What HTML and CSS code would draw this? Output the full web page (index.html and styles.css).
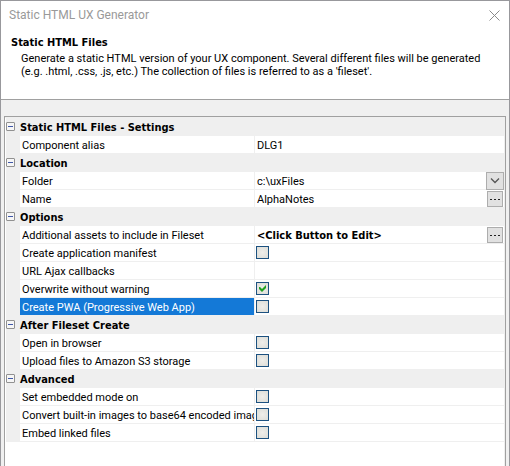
FILE: index.html
```html
<!DOCTYPE html>
<html lang="en">
<head>
<meta charset="utf-8">
<title>Static HTML UX Generator</title>
<link rel="stylesheet" href="styles.css">
</head>
<body>
<main class="dialog">
  <header class="titlebar">
    <span class="title">Static HTML UX Generator</span>
    <button class="close" type="button" aria-label="Close"><svg width="11" height="11" viewBox="0 0 11 11"><path d="M.5 .5l10 10M10.500 .5l-10 10" fill="none" stroke="#8a8a8a"/></svg></button>
  </header>
  <section class="intro">
    <h1>Static HTML Files</h1>
    <p>Generate a static HTML version of your UX component. Several different files will be generated (e.g. .html, .css, .js, etc.) The collection of files is referred to as a 'fileset'.</p>
  </section>
  <form class="panel">
    <div class="sheet">
      <table class="grid">
        <colgroup><col class="col-toggle"><col class="col-name"><col></colgroup>
        <tbody>
          <tr class="group"><td><button class="toggle" type="button" aria-label="Collapse"></button></td><th colspan="2">Static HTML Files - Settings</th></tr>
          <tr><td></td><td class="name"><label for="alias">Component alias</label></td><td class="value"><input class="text" id="alias" type="text" value="DLG1"></td></tr>
        </tbody>
        <tbody>
          <tr class="group"><td><button class="toggle" type="button" aria-label="Collapse"></button></td><th colspan="2">Location</th></tr>
          <tr><td></td><td class="name"><label for="folder">Folder</label></td><td class="value"><div class="field"><select class="text" id="folder"><option>c:\uxFiles</option></select><span class="arrow"><svg width="10" height="6" viewBox="0 0 10 6"><path d="M1 .5L5 4.500L9 .5" fill="none" stroke="#555" stroke-width="1.300"/></svg></span></div></td></tr>
          <tr><td></td><td class="name"><label for="name">Name</label></td><td class="value"><div class="field"><input class="text" id="name" type="text" value="AlphaNotes"><button class="more" type="button" aria-label="Browse name"><i></i><i></i><i></i></button></div></td></tr>
        </tbody>
        <tbody>
          <tr class="group"><td><button class="toggle" type="button" aria-label="Collapse"></button></td><th colspan="2">Options</th></tr>
          <tr><td></td><td class="name"><label for="assets">Additional assets to include in Fileset</label></td><td class="value"><div class="field"><span class="prompt">&lt;Click Button to Edit&gt;</span><button class="more" id="assets" type="button"><i></i><i></i><i></i></button></div></td></tr>
          <tr><td></td><td class="name"><label for="manifest">Create application manifest</label></td><td class="value"><input class="check" id="manifest" type="checkbox"></td></tr>
          <tr><td></td><td class="name"><label for="ajax">URL Ajax callbacks</label></td><td class="value"><input class="text" id="ajax" type="text"></td></tr>
          <tr><td></td><td class="name"><label for="overwrite">Overwrite without warning</label></td><td class="value"><input class="check" id="overwrite" type="checkbox" checked></td></tr>
          <tr class="selected"><td></td><td class="name"><label for="pwa">Create PWA (Progressive Web App)</label></td><td class="value"><input class="check" id="pwa" type="checkbox"></td></tr>
        </tbody>
        <tbody>
          <tr class="group"><td><button class="toggle" type="button" aria-label="Collapse"></button></td><th colspan="2">After Fileset Create</th></tr>
          <tr><td></td><td class="name"><label for="open">Open in browser</label></td><td class="value"><input class="check" id="open" type="checkbox"></td></tr>
          <tr><td></td><td class="name"><label for="upload">Upload files to Amazon S3 storage</label></td><td class="value"><input class="check" id="upload" type="checkbox"></td></tr>
        </tbody>
        <tbody>
          <tr class="group"><td><button class="toggle" type="button" aria-label="Collapse"></button></td><th colspan="2">Advanced</th></tr>
          <tr><td></td><td class="name"><label for="embedded">Set embedded mode on</label></td><td class="value"><input class="check" id="embedded" type="checkbox"></td></tr>
          <tr><td></td><td class="name"><label for="convert">Convert built-in images to base64 encoded images</label></td><td class="value"><input class="check" id="convert" type="checkbox"></td></tr>
          <tr><td></td><td class="name"><label for="linked">Embed linked files</label></td><td class="value"><input class="check" id="linked" type="checkbox"></td></tr>
        </tbody>
      </table>
    </div>
  </form>
</main>
</body>
</html>
```
FILE: styles.css
```css
* { box-sizing: border-box; }
body {
  margin: 0;
  background: #98989c;
  color: #000;
  font: 11px/14px Roboto, Tahoma, sans-serif;
}
button, input, select { font: inherit; color: inherit; margin: 0; padding: 0; border: 0; border-radius: 0; }
.dialog {
  display: flex;
  flex-direction: column;
  min-height: calc(100vh - 1px);
  margin: 1px 1px 0;
  background: #fff;
}
.titlebar {
  display: flex;
  align-items: center;
  justify-content: space-between;
  height: 30px;
  padding: 0 9px 2px 8px;
}
.title { font-size: 12px; line-height: 16px; color: #999; }
.close { display: flex; background: none; }
.intro { height: 69px; padding: 4px 24px 0 10px; border-bottom: 1px solid #a0a0a0; }
.intro h1 { margin: 0; font: bold 11px/16px "DejaVu Sans Condensed", Tahoma, sans-serif; }
.intro p { margin: 1px 0 0 10px; line-height: 13px; }
.panel { flex: 1; display: flex; padding: 16px 3px 0; background: #f0f0f0; }
.sheet {
  flex: 1;
  min-width: 0;
  padding: 1px 1px 0;
  border: 1px solid #a0a0a0;
  border-bottom: 0;
  background: linear-gradient(#efefef, #efefef) top / 100% 1px no-repeat, linear-gradient(#efefef, #efefef) right / 1px 100% no-repeat, #fff;
}
.grid { width: 100%; table-layout: fixed; border-collapse: collapse; }
.col-toggle { width: 14px; }
.col-name { width: 235px; }
.grid tr { height: 18px; }
.grid td, .grid th { height: 18px; padding: 0; vertical-align: top; background: #efefef; }
.grid th { padding-top: 1px; text-align: left; font: bold 11px/17px "DejaVu Sans Condensed", Tahoma, sans-serif; }
.grid .value { background: linear-gradient(#efefef, #efefef) bottom / 100% 1px no-repeat, #fff; }
.grid .name {
  padding: 0 1px 0 2px;
  white-space: nowrap;
  background: linear-gradient(#efefef, #efefef) bottom / 100% 1px no-repeat, linear-gradient(#efefef, #efefef) right / 1px 100% no-repeat, #fff;
}
.grid .selected .name { color: #fff; background: linear-gradient(#efefef, #efefef) bottom / 100% 1px no-repeat, linear-gradient(#efefef, #efefef) right / 1px 100% no-repeat, #1479d7; }
.name label { display: block; height: 18px; padding-top: 2px; line-height: 16px; overflow: hidden; }
.toggle {
  display: block;
  width: 9px;
  height: 9px;
  margin-top: 4px;
  border: 1px solid #919191;
  border-radius: 1px;
  background: linear-gradient(#4058a8, #4058a8) center / 5px 1px no-repeat, #f6f6f6;
}
.field { display: flex; height: 18px; }
.text { display: block; width: 100%; height: 18px; padding-left: 2px; background: none; appearance: none; outline: 0; }
select.text { padding-top: 2px; }
.field .text, .prompt { flex: 1; min-width: 0; }
.prompt { padding: 2px 0 0 2px; font: bold 11px/16px "DejaVu Sans Condensed", Tahoma, sans-serif; }
.arrow {
  display: flex;
  align-items: center;
  justify-content: center;
  width: 18px;
  height: 18px;
  border: 1px solid #adadad;
  background: #e1e1e1;
  pointer-events: none;
}
.more {
  display: flex;
  align-items: center;
  justify-content: center;
  gap: 2px;
  width: 16px;
  height: 16px;
  margin: 1px;
  border: 1px solid #adadad;
  background: #e1e1e1;
}
.more i { width: 2px; height: 1px; background: #222; }
.check {
  display: block;
  width: 13px;
  height: 13px;
  margin: 2px 0 0 1px;
  border: 1px solid #1c5180;
  background: radial-gradient(#efeeea, #dcdcd7);
  appearance: none;
}
.check:checked::after {
  content: "";
  display: block;
  width: 7px;
  height: 7px;
  margin: 2px;
  background: #21a121;
  clip-path: polygon(0 2px, 1px 2px, 3px 4px, 7px 0, 7px 3px, 3px 7px, 0 4px);
}
```
